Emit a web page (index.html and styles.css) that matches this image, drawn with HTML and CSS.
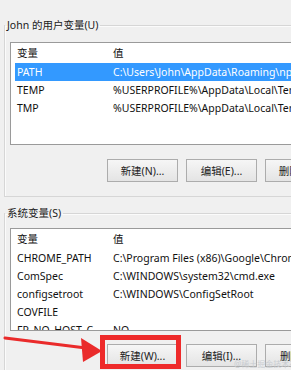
FILE: index.html
```html
<!DOCTYPE html>
<html lang="zh-CN">
<head>
<meta charset="utf-8">
<link rel="stylesheet" href="styles.css">
</head>
<body>
<div class="page">
  <fieldset class="group g1">
    <legend class="glabel">John 的用户变量(U)</legend>
    <div class="list">
      <div class="row head"><span class="c1">变量</span><span class="c2">值</span></div>
      <div class="row sel"><span class="c1">PATH</span><span class="c2">C:\Users\John\AppData\Roaming\npm</span></div>
      <div class="row"><span class="c1">TEMP</span><span class="c2">%USERPROFILE%\AppData\Local\Temp</span></div>
      <div class="row"><span class="c1">TMP</span><span class="c2">%USERPROFILE%\AppData\Local\Temp</span></div>
    </div>
    <div class="buttons">
      <button class="btn">新建(N)...</button>
      <button class="btn">编辑(E)...</button>
      <button class="btn">删除(D)...</button>
    </div>
  </fieldset>
  <fieldset class="group g2">
    <legend class="glabel">系统变量(S)</legend>
    <div class="list">
      <div class="row head"><span class="c1">变量</span><span class="c2">值</span></div>
      <div class="row"><span class="c1">CHROME_PATH</span><span class="c2">C:\Program Files (x86)\Google\Chrome</span></div>
      <div class="row"><span class="c1">ComSpec</span><span class="c2">C:\WINDOWS\system32\cmd.exe</span></div>
      <div class="row"><span class="c1">configsetroot</span><span class="c2">C:\WINDOWS\ConfigSetRoot</span></div>
      <div class="row"><span class="c1">COVFILE</span><span class="c2"></span></div>
      <div class="row"><span class="c1">FP_NO_HOST_CHECK</span><span class="c2">NO</span></div>
    </div>
    <div class="buttons">
      <button class="btn">新建(W)...</button>
      <button class="btn">编辑(I)...</button>
      <button class="btn">删除(L)...</button>
    </div>
  </fieldset>
  <div class="redbox"></div>
  <svg class="arrow" width="110" height="30" viewBox="0 0 110 30">
    <path d="M3 4 L84 14" stroke="#ea2b2b" stroke-width="3" stroke-linecap="round" fill="none"/>
    <polygon points="79,4 100,17 81,28" fill="#ea2b2b"/>
  </svg>
  <div class="watermark">@稀土掘金技术社区</div>
</div>
</body>
</html>
```
FILE: styles.css
```css
html, body {
  margin: 0;
  padding: 0;
  background: #f0f0f0;
  overflow: hidden;
}
body {
  width: 291px;
  height: 370px;
  font-family: "Noto Sans", "Noto Sans CJK SC", sans-serif;
  font-size: 10.5px;
  color: #1a1a1a;
}
.page {
  position: relative;
  width: 340px;
  height: 370px;
  padding-top: 17px;
  box-sizing: border-box;
}
.group {
  margin: 0 0 0 4px;
  border: 1px solid #d6d6d6;
  box-shadow: inset 1px 1px 0 #fbfbfb;
  padding: 9px 0 14px 5px;
  min-width: 0;
}
.g2 {
  margin-top: 8px;
  padding-top: 7px;
}
.glabel {
  margin-left: -5px;
  padding: 0 2px;
  line-height: 16px;
  height: 16px;
  color: #1a1a1a;
}
.list {
  background: #fff;
  border: 1px solid #9a9a9a;
  border-right: none;
  height: 101px;
  overflow: hidden;
}
.row {
  display: flex;
  height: 18px;
  line-height: 18px;
  white-space: nowrap;
  color: #111;
}
.row.head {
  height: 20px;
  line-height: 20px;
}
.row.sel {
  background: #3399ff;
  color: #fff;
  margin-left: 4px;
}
.c1 {
  width: 102px;
  padding: 0 6px 0 6px;
  box-sizing: border-box;
  flex: none;
  overflow: hidden;
  text-overflow: ellipsis;
}
.row.sel .c1 { width: 98px; padding-left: 2px; }
.c2 {
  flex: none;
}
.buttons {
  display: flex;
  gap: 8px;
  margin-top: 13px;
  margin-left: 97px;
}
.g1 .buttons { margin-top: 14px; }
.btn {
  width: 71px;
  height: 23px;
  flex: none;
  font: inherit;
  color: #222;
  background: linear-gradient(#f6f6f6, #e4e4e4);
  border: 1px solid #acacac;
  border-radius: 0;
  padding: 0;
  white-space: nowrap;
  overflow: hidden;
}
.redbox {
  position: absolute;
  left: 100px;
  top: 335px;
  width: 71px;
  height: 24px;
  border: 5px solid #ee2a2a;
}
.arrow {
  position: absolute;
  left: 2px;
  top: 334px;
}
.watermark {
  position: absolute;
  left: 234px;
  top: 359px;
  font-size: 8px;
  line-height: 10px;
  color: #c9cdd2;
  white-space: nowrap;
}
```
